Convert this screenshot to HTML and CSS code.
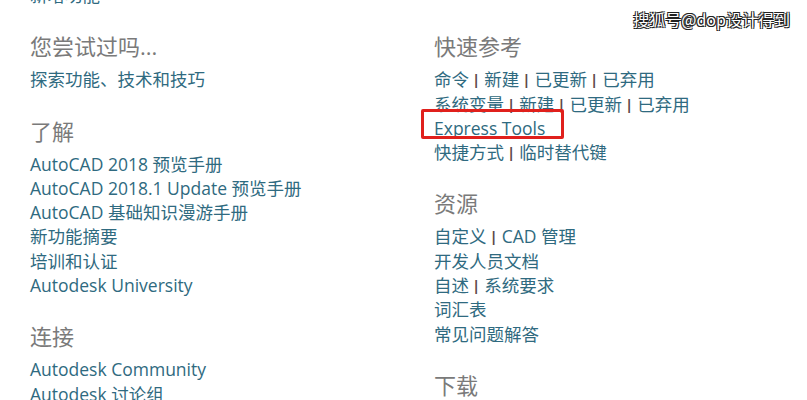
FILE: index.html
```html
<!DOCTYPE html>
<html lang="zh-CN">
<head>
  <meta charset="UTF-8">
  <title>AutoCAD 帮助</title>
  <link rel="stylesheet" href="styles.css">
</head>
<body>
  <div class="watermark">搜狐号@dop设计得到</div>

  <div class="page">
    <div class="column left">
      <div class="section">
        <a href="#">新增功能</a>
      </div>

      <div class="section">
        <h2>您尝试过吗...</h2>
        <a href="#">探索功能、技术和技巧</a>
      </div>

      <div class="section">
        <h2>了解</h2>
        <a href="#">AutoCAD 2018 预览手册</a>
        <a href="#">AutoCAD 2018.1 Update 预览手册</a>
        <a href="#">AutoCAD 基础知识漫游手册</a>
        <a href="#">新功能摘要</a>
        <a href="#">培训和认证</a>
        <a href="#">Autodesk University</a>
      </div>

      <div class="section">
        <h2>连接</h2>
        <a href="#">Autodesk Community</a>
        <a href="#">Autodesk 讨论组</a>
      </div>
    </div>

    <div class="column right">
      <div class="section">
        <h2>快速参考</h2>
        <div class="row"><a href="#">命令</a><span class="sep">|</span><a href="#">新建</a><span class="sep">|</span><a href="#">已更新</a><span class="sep">|</span><a href="#">已弃用</a></div>
        <div class="row"><a href="#">系统变量</a><span class="sep">|</span><a href="#">新建</a><span class="sep">|</span><a href="#">已更新</a><span class="sep">|</span><a href="#">已弃用</a></div>
        <div class="row"><a href="#" class="marked">Express Tools</a></div>
        <div class="row"><a href="#">快捷方式</a><span class="sep">|</span><a href="#">临时替代键</a></div>
      </div>

      <div class="section">
        <h2>资源</h2>
        <div class="row"><a href="#">自定义</a><span class="sep">|</span><a href="#">CAD 管理</a></div>
        <div class="row"><a href="#">开发人员文档</a></div>
        <div class="row"><a href="#">自述</a><span class="sep">|</span><a href="#">系统要求</a></div>
        <div class="row"><a href="#">词汇表</a></div>
        <div class="row"><a href="#">常见问题解答</a></div>
      </div>

      <div class="section">
        <h2>下载</h2>
      </div>
    </div>
  </div>
</body>
</html>
```

FILE: styles.css
```css
body {
  margin: 0;
  background: #ffffff;
  font-family: 'Open Sans', 'Noto Sans CJK SC', sans-serif;
  overflow: hidden;
  height: 400px;
}

.page {
  display: flex;
  padding-left: 30px;
  margin-top: -17px;
}

.column {
  display: flex;
  flex-direction: column;
}

.left {
  width: 404px;
  flex-shrink: 0;
}

.right {
  flex: 1;
  padding-top: 48.3px;
}

.section {
  display: flex;
  flex-direction: column;
  align-items: flex-start;
  margin-bottom: 24px;
}

h2 {
  margin: 0 0 6px;
  font-size: 22px;
  font-weight: normal;
  line-height: 30px;
  color: #7a7a7a;
}

a {
  color: #2f6a80;
  text-decoration: none;
  font-size: 17.5px;
  line-height: 24.3px;
  white-space: nowrap;
}

.row {
  display: flex;
  align-items: center;
  line-height: 24.3px;
}

.sep {
  color: #5d4848;
  font-size: 15px;
  font-weight: bold;
  margin: 0 4px 0 3px;
}

.marked {
  position: relative;
}

.marked::after {
  content: '';
  position: absolute;
  left: -13px;
  right: -19px;
  top: -7px;
  bottom: 1px;
  border: 3px solid #e0201c;
  border-radius: 2px;
}

.watermark {
  position: absolute;
  top: 7px;
  right: 17px;
  font-family: 'Noto Sans CJK SC', sans-serif;
  font-size: 16px;
  color: #ffffff;
  text-shadow: 1px 1px 0 #222, -1px -1px 0 #222, 1px -1px 0 #222, -1px 1px 0 #222;
}
```
